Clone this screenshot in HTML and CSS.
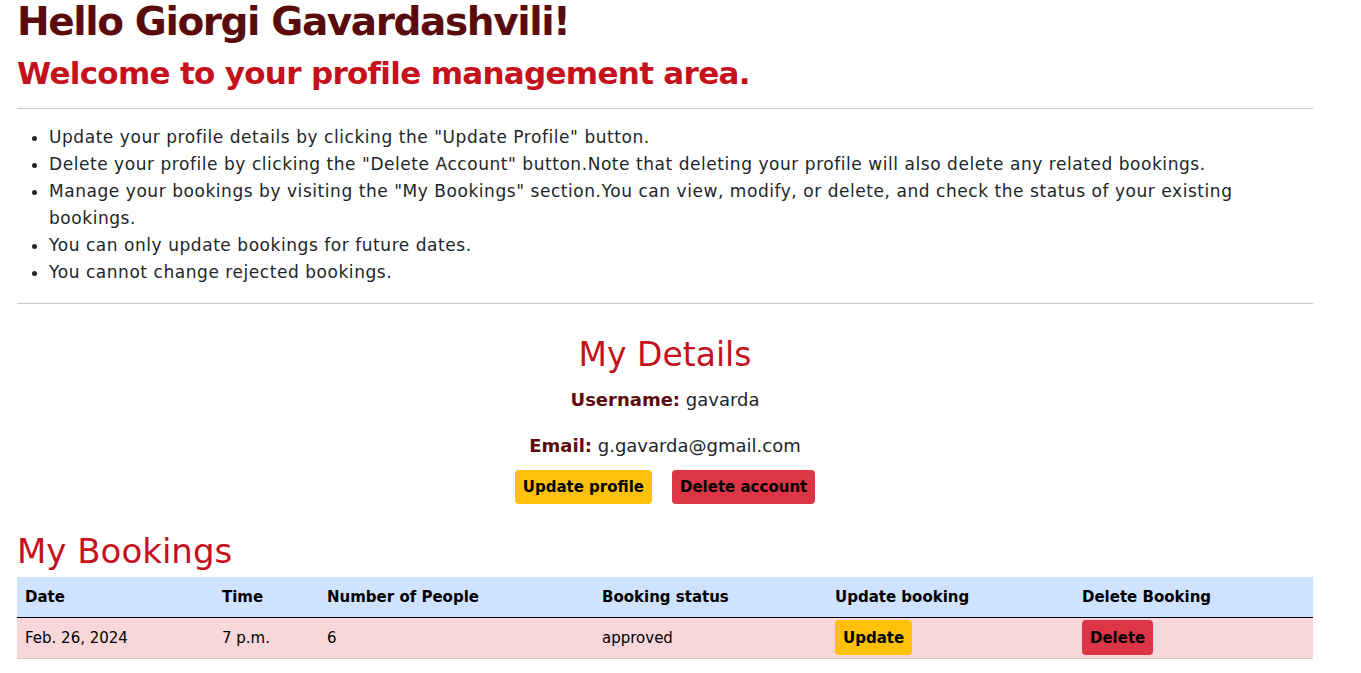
FILE: index.html
```html
<!DOCTYPE html>
<html lang="en">
<head>
<meta charset="utf-8">
<title>Profile</title>
<link rel="stylesheet" href="styles.css">
</head>
<body>
<main class="page">
  <h1 class="hello">Hello Giorgi Gavardashvili!</h1>
  <h2 class="welcome">Welcome to your profile management area.</h2>
  <hr class="rule">
  <ul class="tips">
    <li>Update your profile details by clicking the "Update Profile" button.</li>
    <li>Delete your profile by clicking the "Delete Account" button.Note that deleting your profile will also delete any related bookings.</li>
    <li>Manage your bookings by visiting the "My Bookings" section.You can view, modify, or delete, and check the status of your existing bookings.</li>
    <li>You can only update bookings for future dates.</li>
    <li>You cannot change rejected bookings.</li>
  </ul>
  <hr class="rule">
  <section class="details">
    <h2 class="section-title">My Details</h2>
    <p class="field"><span class="label">Username:</span> gavarda</p>
    <p class="field"><span class="label">Email:</span> g.gavarda@gmail.com</p>
    <div class="actions">
      <button class="btn btn-warning">Update profile</button>
      <button class="btn btn-danger">Delete account</button>
    </div>
  </section>
  <section class="bookings">
    <h2 class="section-title left">My Bookings</h2>
    <table class="table">
      <thead>
        <tr>
          <th class="c-date">Date</th>
          <th class="c-time">Time</th>
          <th class="c-people">Number of People</th>
          <th class="c-status">Booking status</th>
          <th class="c-upd">Update booking</th>
          <th class="c-del">Delete Booking</th>
        </tr>
      </thead>
      <tbody>
        <tr>
          <td>Feb. 26, 2024</td>
          <td>7 p.m.</td>
          <td>6</td>
          <td>approved</td>
          <td><button class="btn btn-warning small">Update</button></td>
          <td><button class="btn btn-danger small">Delete</button></td>
        </tr>
      </tbody>
    </table>
  </section>
</main>
</body>
</html>
```

FILE: styles.css
```css
* { box-sizing: border-box; }
html, body { margin: 0; padding: 0; background: #fff; }
body {
  font-family: "DejaVu Sans", "Open Sans", sans-serif;
  font-size: 16px;
  color: #212529;
}
.page {
  width: 1296px;
  margin-left: 17px;
}
.hello {
  margin: 0;
  font-size: 39px;
  line-height: 44px;
  font-weight: 700;
  letter-spacing: -1.4px;
  color: #5a0c0c;
}
.welcome {
  margin: 5px 0 0;
  font-size: 31px;
  line-height: 48px;
  font-weight: 700;
  letter-spacing: -0.7px;
  color: #c5111c;
}
.rule {
  border: 0;
  border-top: 1px solid #c8c8c8;
  margin: 11px 0 0;
}
.tips {
  margin: 15px 0 17px;
  padding-left: 32px;
  font-size: 17px;
  line-height: 27px;
  letter-spacing: 0.55px;
  color: #212529;
}
.details {
  text-align: center;
  margin-top: 29px;
}
.section-title {
  margin: 0;
  font-size: 33px;
  line-height: 44px;
  font-weight: 500;
  color: #c5111c;
}
.section-title.left { text-align: left; font-size: 34px; }
.field {
  margin: 10px 0 0;
  font-size: 18px;
  line-height: 26px;
}
.field + .field { margin-top: 20px; }
.label {
  font-weight: 700;
  color: #5a0c0c;
}
.actions {
  display: flex;
  justify-content: center;
  gap: 20px;
  margin-top: 11px;
}
.btn {
  font-family: inherit;
  font-size: 15px;
  font-weight: 700;
  color: #000;
  border: 0;
  border-radius: 4px;
  height: 34px;
  padding: 0 8px;
}
.btn-warning { background: #ffc107; }
.btn-danger { background: #dc3545; }
.bookings { margin-top: 25px; }
.table {
  width: 100%;
  border-collapse: collapse;
  margin-top: 4px;
  font-size: 15px;
}
.table th {
  background: #cfe2ff;
  text-align: left;
  font-weight: 700;
  color: #000;
  height: 40px;
  padding: 0 8px;
  border-bottom: 1px solid #000;
}
.table td {
  background: #f8d7da;
  height: 41px;
  padding: 0 8px;
  color: #000;
  border-bottom: 1px solid #dfc2c4;
}
.c-date { width: 197px; }
.c-time { width: 105px; }
.c-people { width: 275px; }
.c-status { width: 233px; }
.c-upd { width: 247px; }
.btn.small { height: 35px; padding: 0 8px; font-size: 15px; }
```
